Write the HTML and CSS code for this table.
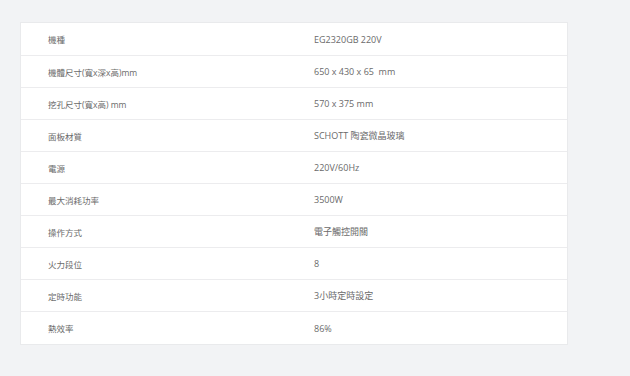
FILE: index.html
```html
<!DOCTYPE html>
<html lang="zh-Hant">
<head>
<meta charset="utf-8">
<link rel="stylesheet" href="styles.css">
</head>
<body>
<div class="page">
  <div class="spec">
    <div class="row"><div class="label">機種</div><div class="value">EG2320GB 220V</div></div>
    <div class="row"><div class="label">機體尺寸(寬x深x高)mm</div><div class="value">650 x 430 x 65&nbsp; mm</div></div>
    <div class="row"><div class="label">挖孔尺寸(寬x高) mm</div><div class="value">570 x 375 mm</div></div>
    <div class="row"><div class="label">面板材質</div><div class="value">SCHOTT 陶瓷微晶玻璃</div></div>
    <div class="row"><div class="label">電源</div><div class="value">220V/60Hz</div></div>
    <div class="row"><div class="label">最大消耗功率</div><div class="value">3500W</div></div>
    <div class="row"><div class="label">操作方式</div><div class="value">電子觸控開關</div></div>
    <div class="row"><div class="label">火力段位</div><div class="value">8</div></div>
    <div class="row"><div class="label">定時功能</div><div class="value">3小時定時設定</div></div>
    <div class="row"><div class="label">熱效率</div><div class="value">86%</div></div>
  </div>
</div>
</body>
</html>
```
FILE: styles.css
```css
html, body {
  margin: 0;
  padding: 0;
  background: #f2f3f5;
}
body {
  font-family: "Open Sans", "Noto Sans CJK TC", sans-serif;
  font-size: 9px;
  color: #6a6a6a;
}
.page {
  padding: 22px 0 0 20px;
}
.spec {
  width: 546px;
  background: #fff;
  border: 1px solid #e9eaec;
}
.row {
  display: grid;
  grid-template-columns: 266px 1fr;
  align-items: center;
  height: 32px;
  padding-left: 27px;
  border-top: 1px solid #ececee;
  box-sizing: border-box;
}
.row:first-child {
  border-top: none;
}
.row:last-child {
  height: 33px;
}
.label {
  font-size: 8.5px;
}
.value {
  font-size: 9px;
}
```
